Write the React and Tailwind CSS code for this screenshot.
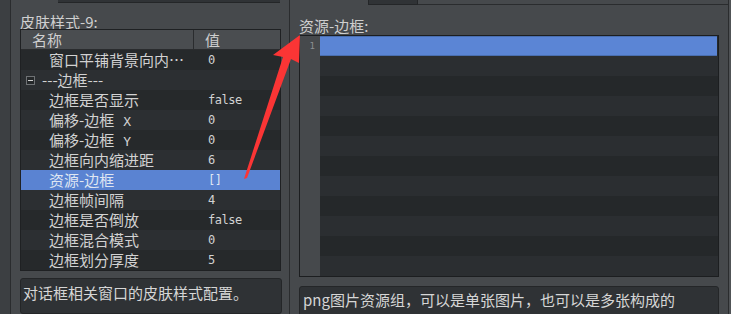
import React from 'react'

const rows = [
  { name: '窗口平铺背景向内…', value: '0' },
  { group: '---边框---' },
  { name: '边框是否显示', value: 'false' },
  { name: '偏移-边框', axis: 'X', value: '0' },
  { name: '偏移-边框', axis: 'Y', value: '0' },
  { name: '边框向内缩进距', value: '6' },
  { name: '资源-边框', value: '[]', selected: true },
  { name: '边框帧间隔', value: '4' },
  { name: '边框是否倒放', value: 'false' },
  { name: '边框混合模式', value: '0' },
  { name: '边框划分厚度', value: '5' },
]

const cjk = { fontFamily: '"Noto Sans CJK SC", "Noto Sans", sans-serif' }
const mono = { fontFamily: '"DejaVu Sans Mono", "Liberation Mono", monospace' }

function PropertyTable() {
  return (
    <div className="w-[261px] border border-[#1f2123] bg-[#26292b]">
      {/* Header */}
      <div className="flex h-[20px] bg-[#4a4d50] border-b border-[#2a2c2e] text-[15px] leading-[20px] text-[#cfcfcf]">
        <div className="w-[173px] pl-[11px] border-r border-[#2a2c2e]">名称</div>
        <div className="flex-1 pl-[11px]">值</div>
      </div>
      {rows.map((row, i) => {
        const bg = row.selected ? 'bg-[#5a83d2]' : i % 2 === 0 ? 'bg-[#26292b]' : 'bg-[#2c2f32]'
        if (row.group) {
          return (
            <div key={i} className={`flex items-center h-[20px] ${bg}`}>
              <div className="ml-[5px] w-[9px] h-[9px] border border-[#6f7275] bg-[#25282a] flex items-center justify-center">
                <div className="w-[5px] h-[1px] bg-[#d0d0d0]" />
              </div>
              <span className="ml-[7px] text-[15px] leading-[20px] text-[#d2d2d2]">{row.group}</span>
            </div>
          )
        }
        return (
          <div key={i} className={`flex h-[20px] ${bg} text-[15px] leading-[20px] ${row.selected ? 'text-[#dfe6f2]' : 'text-[#d2d2d2]'}`}>
            <div className="w-[174px] pl-[28px] whitespace-nowrap overflow-hidden">
              {row.name}
              {row.axis && (
                <span className="ml-[9px] text-[13px]" style={mono}>{row.axis}</span>
              )}
            </div>
            <div className="flex-1 pl-[13px] text-[12px] tracking-[-0.5px]" style={mono}>{row.value}</div>
          </div>
        )
      })}
    </div>
  )
}

function Editor() {
  const lines = Array.from({ length: 12 })
  return (
    <div className="w-[420px] h-[242px] border border-[#1c1e20] flex bg-[#26292b]">
      <div className="w-[20px] bg-[#46494c] flex flex-col">
        <div className="h-[20px] pr-[5px] text-right text-[9px] leading-[20px] text-[#8c8f92]" style={mono}>1</div>
      </div>
      <div className="flex-1 flex flex-col">
        {lines.map((_, i) => (
          <div
            key={i}
            className={`h-[20px] ${i === 0 ? 'bg-[#5b85d5] border-y border-[#4a6fb0] mr-[1px]' : i % 2 === 1 ? 'bg-[#2b2e31]' : 'bg-[#25282a]'}`}
          />
        ))}
      </div>
    </div>
  )
}

export default function App() {
  return (
    <div className="relative w-[731px] h-[314px] overflow-hidden flex bg-[#46494c]" style={cjk}>
      {/* window edge */}
      <div className="w-[11px] h-full bg-[#3c3f42] border-r border-[#2a2c2e]" />

      {/* Left panel */}
      <div className="w-[278px] h-full flex flex-col pl-[9px]">
        <div className="ml-[38px] w-[222px] h-[4px] bg-[#303336] border-b border-[#242628]" />
        <div className="h-[27px] pt-[11px] text-[15px] leading-[15px] text-[#cfcfcf]">皮肤样式-9:</div>
        <PropertyTable />
        <div className="mt-[7px] w-[262px] h-[50px] rounded-[3px] border border-[#242628] bg-[#2f3235] pl-[2px] pt-[5px] text-[15px] leading-[18px] text-[#d6d6d6]">
          对话框相关窗口的皮肤样式配置。
        </div>
      </div>

      {/* Right panel */}
      <div className="w-[440px] h-full flex flex-col border-l border-r border-[#2a2c2e]">
        <div className="flex h-[6px]">
          <div className="w-[78px]" />
          <div className="w-[50px] h-[5px] bg-[#303336] border-x border-b border-[#242628]" />
          <div className="flex-1 border-b border-[#2a2c2e]" />
        </div>
        <div className="pl-[9px] flex flex-col">
          <div className="h-[30px] flex items-end text-[15px] leading-[18px] text-[#cfcfcf]">资源-边框:</div>
          <Editor />
          <div className="mt-[9px] w-[420px] h-[40px] rounded-[3px] border border-[#242628] bg-[#2f3235] pl-[3px] pt-[4px] text-[15px] leading-[18px] text-[#d6d6d6] whitespace-nowrap">
            png图片资源组，可以是单张图片，也可以是多张构成的
          </div>
        </div>
      </div>
      <div className="flex-1 h-full bg-[#505356]" />

      {/* Red annotation arrow */}
      <svg className="absolute left-0 top-0 pointer-events-none" width="731" height="314" viewBox="0 0 731 314">
        <polygon
          points="244,179 283,57 273,55 300,35 299,63 291,59 247,178"
          fill="#fb3535"
        />
      </svg>
    </div>
  )
}
